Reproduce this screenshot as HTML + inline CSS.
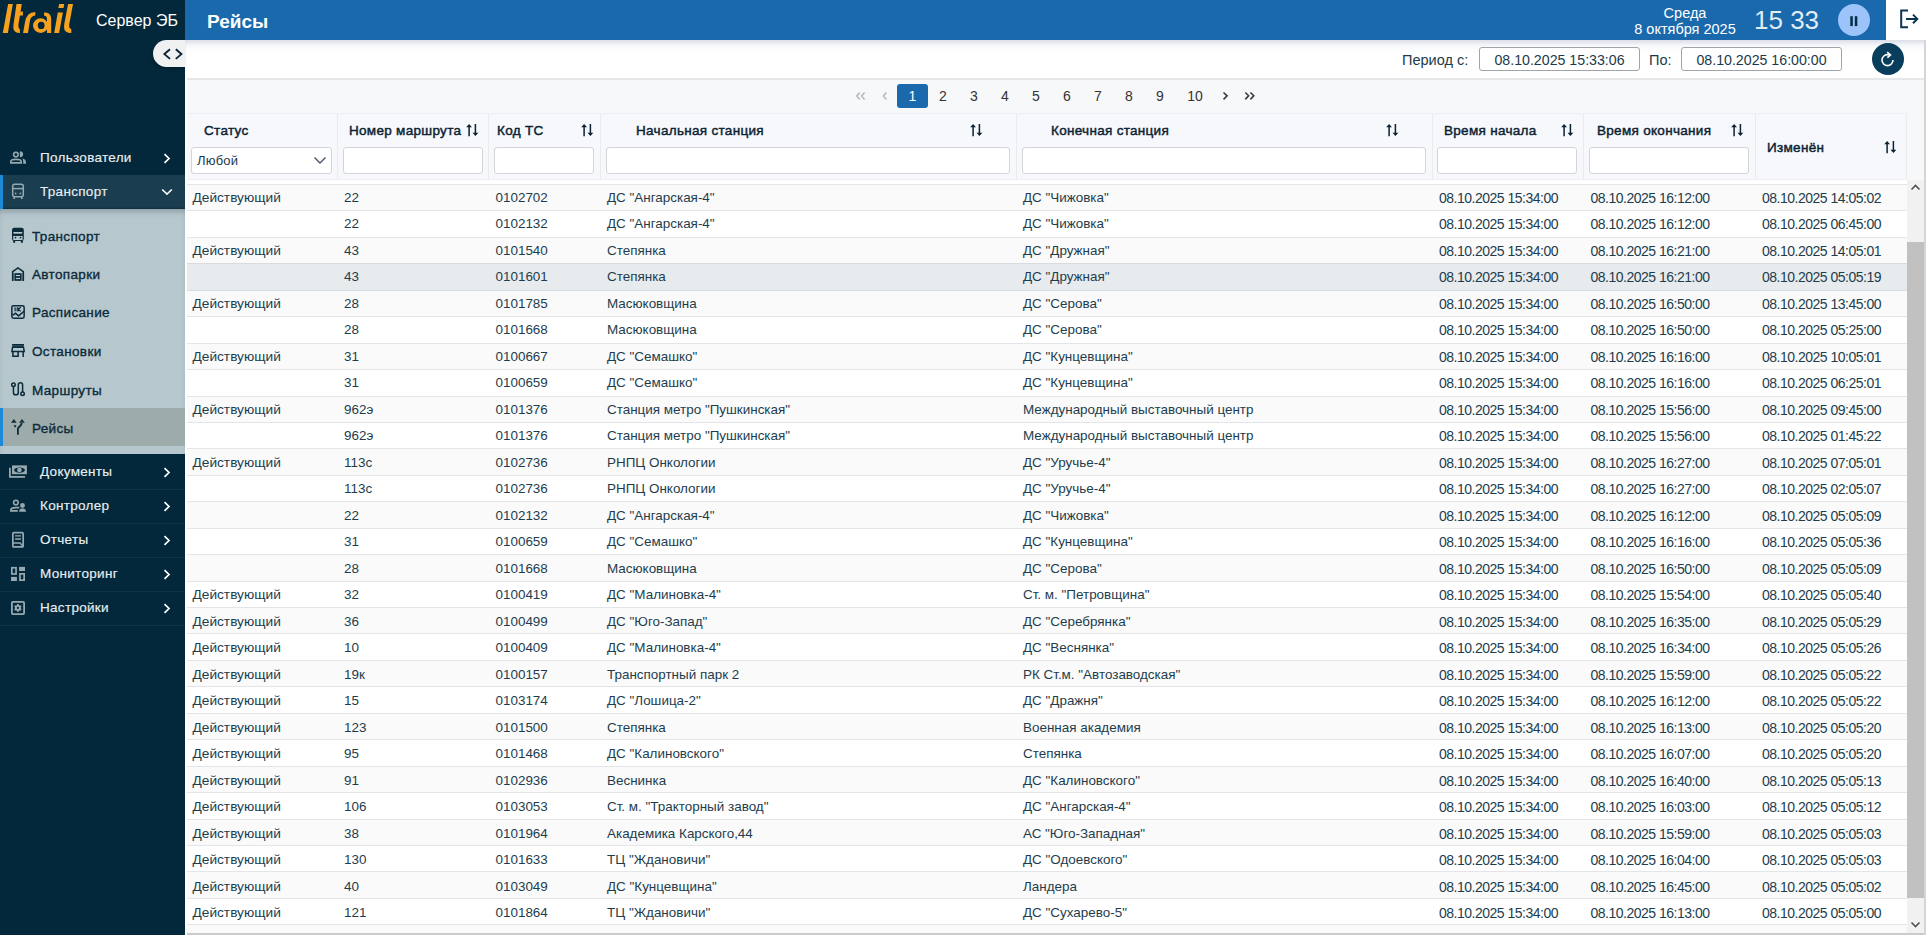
<!DOCTYPE html>
<html lang="ru">
<head>
<meta charset="utf-8">
<title>Рейсы</title>
<style>
html,body{margin:0;padding:0;}
body{width:1926px;height:935px;overflow:hidden;position:relative;background:#ffffff;font-family:"Liberation Sans",sans-serif;color:#1c3a4b;}
.abs{position:absolute;}
#side{position:absolute;left:0;top:0;width:185px;height:935px;background:#03283b;}
#hdr{position:absolute;left:185px;top:0;width:1701px;height:40px;background:#1b69ad;}
#title{position:absolute;left:207px;top:10px;font-size:19px;font-weight:bold;color:#fff;line-height:24px;}
#server{position:absolute;left:96px;top:9px;font-size:16px;color:#fff;line-height:24px;}
#logout{position:absolute;left:1886px;top:0;width:40px;height:40px;background:#fff;}
.date{position:absolute;left:1605px;width:160px;text-align:center;color:#fff;font-size:14.5px;line-height:16px;}
#clock{position:absolute;left:1754px;top:4px;font-size:26px;color:rgba(255,255,255,0.88);line-height:32px;letter-spacing:0px;}
#pause{position:absolute;left:1838px;top:4px;width:32px;height:32px;border-radius:50%;background:#9cc4fb;}
#toolbar{position:absolute;left:185px;top:40px;width:1741px;height:38px;background:#fff;}
#tbline{position:absolute;left:187px;top:78px;width:1739px;height:2px;background:#e6e7e9;}
#shadow{position:absolute;left:185px;top:40px;width:1741px;height:13px;background:linear-gradient(rgba(214,219,230,0.9),rgba(240,242,247,0.5) 45%,rgba(255,255,255,0));}
.lbl{position:absolute;font-size:14.5px;color:#1c3a4b;line-height:16px;}
.dinp{position:absolute;top:47px;height:22px;width:159px;border:1px solid #a0a4a8;border-radius:3px;background:#fff;font-size:14.2px;color:#1c3a4b;line-height:24px;text-align:center;}
#refresh{position:absolute;left:1872px;top:43px;width:32px;height:32px;border-radius:50%;background:#083e5c;}
#pagearea{position:absolute;left:187px;top:79px;width:1739px;height:856px;background:#f7f8fa;}
.pg{position:absolute;top:84px;height:24px;line-height:24px;font-size:14px;color:#333;text-align:center;width:30px;}
.pg.act{background:#1b69ad;color:#fff;border-radius:3px;width:31px;}
.pg.dis{color:#b5bac0;}
#thead{position:absolute;left:187px;top:113px;width:1719px;height:65px;background:#f7f8fb;border-top:1px solid #eceef1;border-bottom:1px solid #eceef0;border-right:1px solid #eaecef;}
.hsep{position:absolute;top:0;width:1px;height:65px;background:#e9ebee;}
.ht{position:absolute;font-size:13.5px;font-weight:normal;-webkit-text-stroke:0.45px #0b2233;letter-spacing:0.3px;color:#0b2233;line-height:16px;white-space:nowrap;}
.sort{position:absolute;}
.inp{position:absolute;top:33px;height:25px;border:1px solid #d3d5d8;border-radius:3px;background:#fff;}
#tbody{position:absolute;left:187px;top:180px;width:1720px;height:753px;background:#fafafa;overflow:hidden;}
.r{position:absolute;left:0;width:1720px;height:26.44px;border-bottom:1px solid #e3e5e8;box-sizing:border-box;background:#fff;}
.r.odd{background:#fafafa;}
.r.hov{background:#e8ebee;border-bottom-color:#d9dbdf;}
.r.pre{border-bottom-color:#d9dbdf;}
.r span.s{font-size:13.7px;}
.r span.d{font-size:14px;top:5.45px;letter-spacing:-0.5px;}
.r span{position:absolute;top:5.45px;font-size:13.45px;line-height:16px;white-space:nowrap;color:#1d3d4d;}
#sb{position:absolute;left:1907px;top:180px;width:17px;height:753px;background:#f1f1f1;}
#thumb{position:absolute;left:1907px;top:242px;width:17px;height:656px;background:#c1c1c1;}
#bottomline{position:absolute;left:187px;top:933px;width:1739px;height:2px;background:#c9cccf;}
/* sidebar */
.sitem{position:absolute;left:0;width:185px;height:34px;color:#e9eef0;font-size:13.5px;line-height:16px;-webkit-text-stroke:0.15px #e9eef0;}
.sitem .t{position:absolute;left:40px;top:9px;white-space:nowrap;letter-spacing:0.3px;}
.sitem svg{position:absolute;}
.sep{position:absolute;left:0;width:185px;height:1px;background:#0d3346;}
#subbg{position:absolute;left:0;top:209px;width:185px;height:245px;background:#b6c8ce;box-shadow:inset 0 5px 6px -3px rgba(0,20,30,0.28);}
.sub{position:absolute;left:0;width:185px;height:38px;color:#0b2a3a;font-size:13.5px;line-height:16px;-webkit-text-stroke:0.35px #0b2a3a;}
.sub .t{position:absolute;left:32px;top:13px;white-space:nowrap;letter-spacing:0.35px;}
.sub svg{position:absolute;left:9px;top:10px;}
</style>
</head>
<body>
<div id="side">
  <svg class="abs" style="left:0;top:0" width="90" height="40" viewBox="0 0 90 40"><g fill="#f7a11e">
<path d="M8.1 4.1H12.8L7.9 32.9H2.8Z"/>
<path d="M16.5 4.1H21.8L18.5 24Q18 28.5 19.9 29.2V32.9Q15.6 33.2 13.9 30Q13 28 13.5 24.5Z"/>
<path d="M20.4 11.5H22.9V15.4H19.7Z"/>
<path d="M23.1 32.9L25 22Q26.7 12.2 35.3 12V15.4Q30.5 15.6 29.8 21.5L28 32.9Z"/>
<path fill-rule="evenodd" d="M33 25.6A7.6 7.3 0 1 0 48.2 25.6A7.6 7.3 0 1 0 33 25.6ZM37.8 25.4A3.4 3.7 0 1 0 44.6 25.4A3.4 3.7 0 1 0 37.8 25.4Z"/>
<path d="M44.1 12.4C49.5 12.4 51.2 15 51.2 19.5V32.9H47V20C47 17 46.3 15.8 44.1 15.8Z"/>
<path d="M59.1 4.1H64.2L63.5 8.1H58.4Z"/>
<path d="M57.8 12.4H62.9L59.1 32.9H54.2Z"/>
<path d="M68.1 4.1H73L69.2 24.5Q68.7 28.6 71.3 29.1V32.9Q65.8 33.2 64.4 29.5Q63.8 27.5 64.2 24.5Z"/>
</g></svg>
  <div id="server">Сервер ЭБ</div>
</div>
<div id="hdr"></div>
<div id="title">Рейсы</div>
<div class="date" style="top:5px">Среда</div>
<div class="date" style="top:21px">8 октября 2025</div>
<div id="clock">15 33</div>
<div id="pause"><svg class="abs" style="left:0;top:0" width="32" height="32"><rect x="12.3" y="12.2" width="2.5" height="9.9" fill="#062d45"/><rect x="16.8" y="12.2" width="2.5" height="9.9" fill="#062d45"/></svg></div>
<div id="logout"><svg class="abs" style="left:0;top:0" width="40" height="40"><path d="M22 10.5H15.2V27.2H22M20 18.9H31M27 14.6L31.3 18.9L27 23.2" fill="none" stroke="#0a3550" stroke-width="2"/></svg></div>

<div id="pagearea"></div>
<div id="toolbar"></div>
<div id="shadow"></div>
<div id="tbline"></div>
<div class="lbl" style="left:1402px;top:52px">Период с:</div>
<div class="dinp" style="left:1479px">08.10.2025 15:33:06</div>
<div class="lbl" style="left:1649px;top:52px">По:</div>
<div class="dinp" style="left:1681px">08.10.2025 16:00:00</div>
<div id="refresh"><svg class="abs" style="left:0;top:0" width="32" height="32"><path d="M21 17.1A5.5 5.5 0 1 1 15.5 11.6H17" fill="none" stroke="#fff" stroke-width="1.6"/><path d="M15.2 9.2L18.4 11.9L15.4 14.6" fill="none" stroke="#fff" stroke-width="1.7"/></svg></div>

<!-- pagination -->
<svg class="abs" style="left:840px;top:84px" width="60" height="24"><g fill="none" stroke="#b3b6ba" stroke-width="1.5"><path d="M19.75 8.5L16.7 12.1L19.75 15.4M24.6 8.5L21.55 12.1L24.6 15.4M46.4 8.5L43.4 12.1L46.4 15.4"/></g></svg>
<div class="pg act" style="left:897px">1</div>
<div class="pg" style="left:928px">2</div>
<div class="pg" style="left:959px">3</div>
<div class="pg" style="left:990px">4</div>
<div class="pg" style="left:1021px">5</div>
<div class="pg" style="left:1052px">6</div>
<div class="pg" style="left:1083px">7</div>
<div class="pg" style="left:1114px">8</div>
<div class="pg" style="left:1145px">9</div>
<div class="pg" style="left:1180px">10</div>
<svg class="abs" style="left:1210px;top:84px" width="60" height="24"><g fill="none" stroke="#3a3a3a" stroke-width="1.6"><path d="M13.5 8.5L17.1 11.8L13.5 15.4M35.3 8.5L38.6 11.8L35.3 15.4M40.4 8.5L43.8 11.8L40.4 15.4"/></g></svg>

<!-- table header -->
<div id="thead">
  <div class="hsep" style="left:150px"></div>
  <div class="hsep" style="left:301px"></div>
  <div class="hsep" style="left:413px"></div>
  <div class="hsep" style="left:829px"></div>
  <div class="hsep" style="left:1245px"></div>
  <div class="hsep" style="left:1396px"></div>
  <div class="hsep" style="left:1568px"></div>
  <div class="ht" style="left:17px;top:9px">Статус</div>
  <div class="ht" style="left:162px;top:9px">Номер маршрута</div>
  <div class="ht" style="left:310px;top:9px">Код ТС</div>
  <div class="ht" style="left:449px;top:9px">Начальная станция</div>
  <div class="ht" style="left:864px;top:9px">Конечная станция</div>
  <div class="ht" style="left:1257px;top:9px">Время начала</div>
  <div class="ht" style="left:1410px;top:9px">Время окончания</div>
  <div class="ht" style="left:1580px;top:26px">Изменён</div>
  <div class="abs" style="left:279px;top:9px"><svg class="sort" width="13" height="14" viewBox="0 0 13 14"><path d="M3.1 3.5V13.2M9.4 1V10.5" fill="none" stroke="#0b2233" stroke-width="1.5"/><path d="M0.2 4.2L3.1 0.9L6 4.2ZM6.5 9.8L9.4 13.1L12.3 9.8Z" fill="#0b2233"/></svg></div>
  <div class="abs" style="left:394px;top:9px"><svg class="sort" width="13" height="14" viewBox="0 0 13 14"><path d="M3.1 3.5V13.2M9.4 1V10.5" fill="none" stroke="#0b2233" stroke-width="1.5"/><path d="M0.2 4.2L3.1 0.9L6 4.2ZM6.5 9.8L9.4 13.1L12.3 9.8Z" fill="#0b2233"/></svg></div>
  <div class="abs" style="left:783px;top:9px"><svg class="sort" width="13" height="14" viewBox="0 0 13 14"><path d="M3.1 3.5V13.2M9.4 1V10.5" fill="none" stroke="#0b2233" stroke-width="1.5"/><path d="M0.2 4.2L3.1 0.9L6 4.2ZM6.5 9.8L9.4 13.1L12.3 9.8Z" fill="#0b2233"/></svg></div>
  <div class="abs" style="left:1199px;top:9px"><svg class="sort" width="13" height="14" viewBox="0 0 13 14"><path d="M3.1 3.5V13.2M9.4 1V10.5" fill="none" stroke="#0b2233" stroke-width="1.5"/><path d="M0.2 4.2L3.1 0.9L6 4.2ZM6.5 9.8L9.4 13.1L12.3 9.8Z" fill="#0b2233"/></svg></div>
  <div class="abs" style="left:1374px;top:9px"><svg class="sort" width="13" height="14" viewBox="0 0 13 14"><path d="M3.1 3.5V13.2M9.4 1V10.5" fill="none" stroke="#0b2233" stroke-width="1.5"/><path d="M0.2 4.2L3.1 0.9L6 4.2ZM6.5 9.8L9.4 13.1L12.3 9.8Z" fill="#0b2233"/></svg></div>
  <div class="abs" style="left:1544px;top:9px"><svg class="sort" width="13" height="14" viewBox="0 0 13 14"><path d="M3.1 3.5V13.2M9.4 1V10.5" fill="none" stroke="#0b2233" stroke-width="1.5"/><path d="M0.2 4.2L3.1 0.9L6 4.2ZM6.5 9.8L9.4 13.1L12.3 9.8Z" fill="#0b2233"/></svg></div>
  <div class="abs" style="left:1697px;top:26px"><svg class="sort" width="13" height="14" viewBox="0 0 13 14"><path d="M3.1 3.5V13.2M9.4 1V10.5" fill="none" stroke="#0b2233" stroke-width="1.5"/><path d="M0.2 4.2L3.1 0.9L6 4.2ZM6.5 9.8L9.4 13.1L12.3 9.8Z" fill="#0b2233"/></svg></div>
  <div class="inp" style="left:4px;width:139px;">
    <div class="abs" style="left:5px;top:5px;font-size:13px;line-height:16px;color:#1c3a4b;letter-spacing:0.2px">Любой</div>
    <svg class="abs" style="left:121px;top:8px" width="14" height="9"><path d="M1.5 1.5L7 7L12.5 1.5" fill="none" stroke="#44566a" stroke-width="1.4"/></svg>
  </div>
  <div class="inp" style="left:156px;width:138px;"></div>
  <div class="inp" style="left:307px;width:98px;"></div>
  <div class="inp" style="left:419px;width:402px;"></div>
  <div class="inp" style="left:835px;width:402px;"></div>
  <div class="inp" style="left:1250px;width:138px;"></div>
  <div class="inp" style="left:1402px;width:158px;"></div>
</div>
<div class="abs" style="left:187px;top:180px;width:1720px;height:5px;background:#fff;border-bottom:1px solid #e3e5e8;box-sizing:border-box"></div>

<div id="tbody" style="top:185px;height:748px">
<div class="r odd" style="top:0.00px"><span class="s" style="left:5.5px;top:5.00px">Действующий</span><span style="left:157.0px;top:5.00px">22</span><span style="left:308.5px;top:5.00px">0102702</span><span style="left:420.0px;top:5.00px">ДС &quot;Ангарская-4&quot;</span><span style="left:836.0px;top:5.00px">ДС &quot;Чижовка&quot;</span><span class="d" style="left:1252.0px;top:5.00px">08.10.2025 15:34:00</span><span class="d" style="left:1403.5px;top:5.00px">08.10.2025 16:12:00</span><span class="d" style="left:1575.0px;top:5.00px">08.10.2025 14:05:02</span></div>
<div class="r" style="top:26.44px"><span class="s" style="left:5.5px;top:5.04px"></span><span style="left:157.0px;top:5.04px">22</span><span style="left:308.5px;top:5.04px">0102132</span><span style="left:420.0px;top:5.04px">ДС &quot;Ангарская-4&quot;</span><span style="left:836.0px;top:5.04px">ДС &quot;Чижовка&quot;</span><span class="d" style="left:1252.0px;top:5.04px">08.10.2025 15:34:00</span><span class="d" style="left:1403.5px;top:5.04px">08.10.2025 16:12:00</span><span class="d" style="left:1575.0px;top:5.04px">08.10.2025 06:45:00</span></div>
<div class="r odd pre" style="top:52.88px"><span class="s" style="left:5.5px;top:5.09px">Действующий</span><span style="left:157.0px;top:5.09px">43</span><span style="left:308.5px;top:5.09px">0101540</span><span style="left:420.0px;top:5.09px">Степянка</span><span style="left:836.0px;top:5.09px">ДС &quot;Дружная&quot;</span><span class="d" style="left:1252.0px;top:5.09px">08.10.2025 15:34:00</span><span class="d" style="left:1403.5px;top:5.09px">08.10.2025 16:21:00</span><span class="d" style="left:1575.0px;top:5.09px">08.10.2025 14:05:01</span></div>
<div class="r hov" style="top:79.32px"><span class="s" style="left:5.5px;top:5.13px"></span><span style="left:157.0px;top:5.13px">43</span><span style="left:308.5px;top:5.13px">0101601</span><span style="left:420.0px;top:5.13px">Степянка</span><span style="left:836.0px;top:5.13px">ДС &quot;Дружная&quot;</span><span class="d" style="left:1252.0px;top:5.13px">08.10.2025 15:34:00</span><span class="d" style="left:1403.5px;top:5.13px">08.10.2025 16:21:00</span><span class="d" style="left:1575.0px;top:5.13px">08.10.2025 05:05:19</span></div>
<div class="r odd" style="top:105.76px"><span class="s" style="left:5.5px;top:5.18px">Действующий</span><span style="left:157.0px;top:5.18px">28</span><span style="left:308.5px;top:5.18px">0101785</span><span style="left:420.0px;top:5.18px">Масюковщина</span><span style="left:836.0px;top:5.18px">ДС &quot;Серова&quot;</span><span class="d" style="left:1252.0px;top:5.18px">08.10.2025 15:34:00</span><span class="d" style="left:1403.5px;top:5.18px">08.10.2025 16:50:00</span><span class="d" style="left:1575.0px;top:5.18px">08.10.2025 13:45:00</span></div>
<div class="r" style="top:132.20px"><span class="s" style="left:5.5px;top:5.22px"></span><span style="left:157.0px;top:5.22px">28</span><span style="left:308.5px;top:5.22px">0101668</span><span style="left:420.0px;top:5.22px">Масюковщина</span><span style="left:836.0px;top:5.22px">ДС &quot;Серова&quot;</span><span class="d" style="left:1252.0px;top:5.22px">08.10.2025 15:34:00</span><span class="d" style="left:1403.5px;top:5.22px">08.10.2025 16:50:00</span><span class="d" style="left:1575.0px;top:5.22px">08.10.2025 05:25:00</span></div>
<div class="r odd" style="top:158.64px"><span class="s" style="left:5.5px;top:5.27px">Действующий</span><span style="left:157.0px;top:5.27px">31</span><span style="left:308.5px;top:5.27px">0100667</span><span style="left:420.0px;top:5.27px">ДС &quot;Семашко&quot;</span><span style="left:836.0px;top:5.27px">ДС &quot;Кунцевщина&quot;</span><span class="d" style="left:1252.0px;top:5.27px">08.10.2025 15:34:00</span><span class="d" style="left:1403.5px;top:5.27px">08.10.2025 16:16:00</span><span class="d" style="left:1575.0px;top:5.27px">08.10.2025 10:05:01</span></div>
<div class="r" style="top:185.08px"><span class="s" style="left:5.5px;top:5.32px"></span><span style="left:157.0px;top:5.32px">31</span><span style="left:308.5px;top:5.32px">0100659</span><span style="left:420.0px;top:5.32px">ДС &quot;Семашко&quot;</span><span style="left:836.0px;top:5.32px">ДС &quot;Кунцевщина&quot;</span><span class="d" style="left:1252.0px;top:5.32px">08.10.2025 15:34:00</span><span class="d" style="left:1403.5px;top:5.32px">08.10.2025 16:16:00</span><span class="d" style="left:1575.0px;top:5.32px">08.10.2025 06:25:01</span></div>
<div class="r odd" style="top:211.52px"><span class="s" style="left:5.5px;top:5.36px">Действующий</span><span style="left:157.0px;top:5.36px">962э</span><span style="left:308.5px;top:5.36px">0101376</span><span style="left:420.0px;top:5.36px">Станция метро &quot;Пушкинская&quot;</span><span style="left:836.0px;top:5.36px">Международный выставочный центр</span><span class="d" style="left:1252.0px;top:5.36px">08.10.2025 15:34:00</span><span class="d" style="left:1403.5px;top:5.36px">08.10.2025 15:56:00</span><span class="d" style="left:1575.0px;top:5.36px">08.10.2025 09:45:00</span></div>
<div class="r" style="top:237.96px"><span class="s" style="left:5.5px;top:5.41px"></span><span style="left:157.0px;top:5.41px">962э</span><span style="left:308.5px;top:5.41px">0101376</span><span style="left:420.0px;top:5.41px">Станция метро &quot;Пушкинская&quot;</span><span style="left:836.0px;top:5.41px">Международный выставочный центр</span><span class="d" style="left:1252.0px;top:5.41px">08.10.2025 15:34:00</span><span class="d" style="left:1403.5px;top:5.41px">08.10.2025 15:56:00</span><span class="d" style="left:1575.0px;top:5.41px">08.10.2025 01:45:22</span></div>
<div class="r odd" style="top:264.40px"><span class="s" style="left:5.5px;top:5.45px">Действующий</span><span style="left:157.0px;top:5.45px">113с</span><span style="left:308.5px;top:5.45px">0102736</span><span style="left:420.0px;top:5.45px">РНПЦ Онкологии</span><span style="left:836.0px;top:5.45px">ДС &quot;Уручье-4&quot;</span><span class="d" style="left:1252.0px;top:5.45px">08.10.2025 15:34:00</span><span class="d" style="left:1403.5px;top:5.45px">08.10.2025 16:27:00</span><span class="d" style="left:1575.0px;top:5.45px">08.10.2025 07:05:01</span></div>
<div class="r" style="top:290.84px"><span class="s" style="left:5.5px;top:5.50px"></span><span style="left:157.0px;top:5.50px">113с</span><span style="left:308.5px;top:5.50px">0102736</span><span style="left:420.0px;top:5.50px">РНПЦ Онкологии</span><span style="left:836.0px;top:5.50px">ДС &quot;Уручье-4&quot;</span><span class="d" style="left:1252.0px;top:5.50px">08.10.2025 15:34:00</span><span class="d" style="left:1403.5px;top:5.50px">08.10.2025 16:27:00</span><span class="d" style="left:1575.0px;top:5.50px">08.10.2025 02:05:07</span></div>
<div class="r odd" style="top:317.28px"><span class="s" style="left:5.5px;top:5.54px"></span><span style="left:157.0px;top:5.54px">22</span><span style="left:308.5px;top:5.54px">0102132</span><span style="left:420.0px;top:5.54px">ДС &quot;Ангарская-4&quot;</span><span style="left:836.0px;top:5.54px">ДС &quot;Чижовка&quot;</span><span class="d" style="left:1252.0px;top:5.54px">08.10.2025 15:34:00</span><span class="d" style="left:1403.5px;top:5.54px">08.10.2025 16:12:00</span><span class="d" style="left:1575.0px;top:5.54px">08.10.2025 05:05:09</span></div>
<div class="r" style="top:343.72px"><span class="s" style="left:5.5px;top:5.58px"></span><span style="left:157.0px;top:5.58px">31</span><span style="left:308.5px;top:5.58px">0100659</span><span style="left:420.0px;top:5.58px">ДС &quot;Семашко&quot;</span><span style="left:836.0px;top:5.58px">ДС &quot;Кунцевщина&quot;</span><span class="d" style="left:1252.0px;top:5.58px">08.10.2025 15:34:00</span><span class="d" style="left:1403.5px;top:5.58px">08.10.2025 16:16:00</span><span class="d" style="left:1575.0px;top:5.58px">08.10.2025 05:05:36</span></div>
<div class="r odd" style="top:370.16px"><span class="s" style="left:5.5px;top:5.63px"></span><span style="left:157.0px;top:5.63px">28</span><span style="left:308.5px;top:5.63px">0101668</span><span style="left:420.0px;top:5.63px">Масюковщина</span><span style="left:836.0px;top:5.63px">ДС &quot;Серова&quot;</span><span class="d" style="left:1252.0px;top:5.63px">08.10.2025 15:34:00</span><span class="d" style="left:1403.5px;top:5.63px">08.10.2025 16:50:00</span><span class="d" style="left:1575.0px;top:5.63px">08.10.2025 05:05:09</span></div>
<div class="r" style="top:396.60px"><span class="s" style="left:5.5px;top:5.67px">Действующий</span><span style="left:157.0px;top:5.67px">32</span><span style="left:308.5px;top:5.67px">0100419</span><span style="left:420.0px;top:5.67px">ДС &quot;Малиновка-4&quot;</span><span style="left:836.0px;top:5.67px">Ст. м. &quot;Петровщина&quot;</span><span class="d" style="left:1252.0px;top:5.67px">08.10.2025 15:34:00</span><span class="d" style="left:1403.5px;top:5.67px">08.10.2025 15:54:00</span><span class="d" style="left:1575.0px;top:5.67px">08.10.2025 05:05:40</span></div>
<div class="r odd" style="top:423.04px"><span class="s" style="left:5.5px;top:5.72px">Действующий</span><span style="left:157.0px;top:5.72px">36</span><span style="left:308.5px;top:5.72px">0100499</span><span style="left:420.0px;top:5.72px">ДС &quot;Юго-Запад&quot;</span><span style="left:836.0px;top:5.72px">ДС &quot;Серебрянка&quot;</span><span class="d" style="left:1252.0px;top:5.72px">08.10.2025 15:34:00</span><span class="d" style="left:1403.5px;top:5.72px">08.10.2025 16:35:00</span><span class="d" style="left:1575.0px;top:5.72px">08.10.2025 05:05:29</span></div>
<div class="r" style="top:449.48px"><span class="s" style="left:5.5px;top:5.76px">Действующий</span><span style="left:157.0px;top:5.76px">10</span><span style="left:308.5px;top:5.76px">0100409</span><span style="left:420.0px;top:5.76px">ДС &quot;Малиновка-4&quot;</span><span style="left:836.0px;top:5.76px">ДС &quot;Веснянка&quot;</span><span class="d" style="left:1252.0px;top:5.76px">08.10.2025 15:34:00</span><span class="d" style="left:1403.5px;top:5.76px">08.10.2025 16:34:00</span><span class="d" style="left:1575.0px;top:5.76px">08.10.2025 05:05:26</span></div>
<div class="r odd" style="top:475.92px"><span class="s" style="left:5.5px;top:5.81px">Действующий</span><span style="left:157.0px;top:5.81px">19к</span><span style="left:308.5px;top:5.81px">0100157</span><span style="left:420.0px;top:5.81px">Транспортный парк 2</span><span style="left:836.0px;top:5.81px">РК Ст.м. &quot;Автозаводская&quot;</span><span class="d" style="left:1252.0px;top:5.81px">08.10.2025 15:34:00</span><span class="d" style="left:1403.5px;top:5.81px">08.10.2025 15:59:00</span><span class="d" style="left:1575.0px;top:5.81px">08.10.2025 05:05:22</span></div>
<div class="r" style="top:502.36px"><span class="s" style="left:5.5px;top:5.86px">Действующий</span><span style="left:157.0px;top:5.86px">15</span><span style="left:308.5px;top:5.86px">0103174</span><span style="left:420.0px;top:5.86px">ДС &quot;Лошица-2&quot;</span><span style="left:836.0px;top:5.86px">ДС &quot;Дражня&quot;</span><span class="d" style="left:1252.0px;top:5.86px">08.10.2025 15:34:00</span><span class="d" style="left:1403.5px;top:5.86px">08.10.2025 16:12:00</span><span class="d" style="left:1575.0px;top:5.86px">08.10.2025 05:05:22</span></div>
<div class="r odd" style="top:528.80px"><span class="s" style="left:5.5px;top:5.90px">Действующий</span><span style="left:157.0px;top:5.90px">123</span><span style="left:308.5px;top:5.90px">0101500</span><span style="left:420.0px;top:5.90px">Степянка</span><span style="left:836.0px;top:5.90px">Военная академия</span><span class="d" style="left:1252.0px;top:5.90px">08.10.2025 15:34:00</span><span class="d" style="left:1403.5px;top:5.90px">08.10.2025 16:13:00</span><span class="d" style="left:1575.0px;top:5.90px">08.10.2025 05:05:20</span></div>
<div class="r" style="top:555.24px"><span class="s" style="left:5.5px;top:5.95px">Действующий</span><span style="left:157.0px;top:5.95px">95</span><span style="left:308.5px;top:5.95px">0101468</span><span style="left:420.0px;top:5.95px">ДС &quot;Калиновского&quot;</span><span style="left:836.0px;top:5.95px">Степянка</span><span class="d" style="left:1252.0px;top:5.95px">08.10.2025 15:34:00</span><span class="d" style="left:1403.5px;top:5.95px">08.10.2025 16:07:00</span><span class="d" style="left:1575.0px;top:5.95px">08.10.2025 05:05:20</span></div>
<div class="r odd" style="top:581.68px"><span class="s" style="left:5.5px;top:5.99px">Действующий</span><span style="left:157.0px;top:5.99px">91</span><span style="left:308.5px;top:5.99px">0102936</span><span style="left:420.0px;top:5.99px">Веснинка</span><span style="left:836.0px;top:5.99px">ДС &quot;Калиновского&quot;</span><span class="d" style="left:1252.0px;top:5.99px">08.10.2025 15:34:00</span><span class="d" style="left:1403.5px;top:5.99px">08.10.2025 16:40:00</span><span class="d" style="left:1575.0px;top:5.99px">08.10.2025 05:05:13</span></div>
<div class="r" style="top:608.12px"><span class="s" style="left:5.5px;top:6.04px">Действующий</span><span style="left:157.0px;top:6.04px">106</span><span style="left:308.5px;top:6.04px">0103053</span><span style="left:420.0px;top:6.04px">Ст. м. &quot;Тракторный завод&quot;</span><span style="left:836.0px;top:6.04px">ДС &quot;Ангарская-4&quot;</span><span class="d" style="left:1252.0px;top:6.04px">08.10.2025 15:34:00</span><span class="d" style="left:1403.5px;top:6.04px">08.10.2025 16:03:00</span><span class="d" style="left:1575.0px;top:6.04px">08.10.2025 05:05:12</span></div>
<div class="r odd" style="top:634.56px"><span class="s" style="left:5.5px;top:6.08px">Действующий</span><span style="left:157.0px;top:6.08px">38</span><span style="left:308.5px;top:6.08px">0101964</span><span style="left:420.0px;top:6.08px">Академика Карского,44</span><span style="left:836.0px;top:6.08px">АС &quot;Юго-Западная&quot;</span><span class="d" style="left:1252.0px;top:6.08px">08.10.2025 15:34:00</span><span class="d" style="left:1403.5px;top:6.08px">08.10.2025 15:59:00</span><span class="d" style="left:1575.0px;top:6.08px">08.10.2025 05:05:03</span></div>
<div class="r" style="top:661.00px"><span class="s" style="left:5.5px;top:6.12px">Действующий</span><span style="left:157.0px;top:6.12px">130</span><span style="left:308.5px;top:6.12px">0101633</span><span style="left:420.0px;top:6.12px">ТЦ &quot;Ждановичи&quot;</span><span style="left:836.0px;top:6.12px">ДС &quot;Одоевского&quot;</span><span class="d" style="left:1252.0px;top:6.12px">08.10.2025 15:34:00</span><span class="d" style="left:1403.5px;top:6.12px">08.10.2025 16:04:00</span><span class="d" style="left:1575.0px;top:6.12px">08.10.2025 05:05:03</span></div>
<div class="r odd" style="top:687.44px"><span class="s" style="left:5.5px;top:6.17px">Действующий</span><span style="left:157.0px;top:6.17px">40</span><span style="left:308.5px;top:6.17px">0103049</span><span style="left:420.0px;top:6.17px">ДС &quot;Кунцевщина&quot;</span><span style="left:836.0px;top:6.17px">Ландера</span><span class="d" style="left:1252.0px;top:6.17px">08.10.2025 15:34:00</span><span class="d" style="left:1403.5px;top:6.17px">08.10.2025 16:45:00</span><span class="d" style="left:1575.0px;top:6.17px">08.10.2025 05:05:02</span></div>
<div class="r" style="top:713.88px"><span class="s" style="left:5.5px;top:6.21px">Действующий</span><span style="left:157.0px;top:6.21px">121</span><span style="left:308.5px;top:6.21px">0101864</span><span style="left:420.0px;top:6.21px">ТЦ &quot;Ждановичи&quot;</span><span style="left:836.0px;top:6.21px">ДС &quot;Сухарево-5&quot;</span><span class="d" style="left:1252.0px;top:6.21px">08.10.2025 15:34:00</span><span class="d" style="left:1403.5px;top:6.21px">08.10.2025 16:13:00</span><span class="d" style="left:1575.0px;top:6.21px">08.10.2025 05:05:00</span></div>
</div>
<div id="sb"></div>
<div id="thumb"></div>
<svg class="abs" style="left:1907px;top:180px" width="17" height="14"><path d="M4.5 9.5L8.5 5.5L12.5 9.5" fill="none" stroke="#505050" stroke-width="1.6"/></svg>
<svg class="abs" style="left:1907px;top:918px" width="17" height="14"><path d="M4.5 4.5L8.5 8.5L12.5 4.5" fill="none" stroke="#505050" stroke-width="1.6"/></svg>
<div id="bottomline"></div>
<div class="abs" style="left:1924px;top:40px;width:2px;height:895px;background:#d3d5d8"></div>

<!-- sidebar menu -->
<div class="sitem" style="top:141px">
  <div class="t">Пользователи</div>
  <svg style="left:163px;top:12px" width="8" height="11"><path d="M1.5 1.2L6 5.5L1.5 9.8" fill="none" stroke="#fff" stroke-width="1.7"/></svg>
</div>
<svg class="abs" style="left:6px;top:146px" width="24" height="24" viewBox="0 0 24 24"><g fill="none" stroke="#97a9b0" stroke-width="1.6"><circle cx="9.9" cy="8.5" r="2.3"/><path d="M4.8 16.9V15.6C4.8 13.9 7 13.4 10 13.4S15.2 13.9 15.2 15.6V16.9Z"/></g><path d="M14 5.2A3.05 3.05 0 0 1 14 11.3Q13.6 8.25 14 5.2Z" fill="#97a9b0"/><path d="M16.4 12.5C18.6 13 20 14.3 20 16.4V17.7H17.2V16C17.2 14.6 17 13.5 16.4 12.5Z" fill="#97a9b0"/></svg>

<div class="sitem" style="top:175px;background:#1a3d50;box-shadow:inset 0 -2px 2px -1px rgba(0,0,0,0.3)">
  <div class="abs" style="left:0;top:0;width:3px;height:34px;background:#1d8ad8"></div>
  <div class="t">Транспорт</div>
  <svg style="left:161px;top:13px" width="12" height="9"><path d="M1.2 1.5L6 6L10.8 1.5" fill="none" stroke="#fff" stroke-width="1.7"/></svg>
</div>
<svg class="abs" style="left:6px;top:180px" width="24" height="24" viewBox="0 0 24 24"><g fill="none" stroke="#97a9b0" stroke-width="1.5"><rect x="6.7" y="4.2" width="10.6" height="12.6" rx="2"/><path d="M6.7 8.6H17.3"/></g><g fill="#97a9b0"><circle cx="9.6" cy="13.5" r="0.9"/><circle cx="14.4" cy="13.5" r="0.9"/><rect x="7.4" y="16.5" width="1.6" height="2.5"/><rect x="15" y="16.5" width="1.6" height="2.5"/></g></svg>

<div id="subbg"></div>
<div class="abs" style="left:0;top:408px;width:185px;height:38px;background:#9eabab"></div>
<div class="abs" style="left:0;top:408px;width:3px;height:38px;background:#1d8ad8"></div>
<div class="sub" style="top:216px"><div class="t">Транспорт</div></div>
<svg class="abs" style="left:6px;top:224px" width="24" height="24" viewBox="0 0 24 24"><rect x="6" y="3.8" width="11.8" height="13.1" rx="2.2" fill="#0b2a3a"/><g fill="#b6c8ce"><rect x="7.4" y="8" width="8.8" height="1.65"/><rect x="7.2" y="12" width="9.4" height="4"/></g><g fill="#0b2a3a"><circle cx="9.5" cy="13.6" r="0.9"/><circle cx="14.5" cy="13.6" r="0.9"/><rect x="7.2" y="16.5" width="1.9" height="2.3"/><rect x="14.9" y="16.5" width="1.9" height="2.3"/></g></svg>

<div class="sub" style="top:254px"><div class="t">Автопарки</div></div>
<svg class="abs" style="left:6px;top:262px" width="24" height="24" viewBox="0 0 24 24"><path d="M7.5 11.2H16.5V18.8H7.5Z" fill="#4d6874"/><path d="M6.7 19V9.6L11.95 5.9L17.3 9.6V19" fill="none" stroke="#0b2a3a" stroke-width="1.6"/><rect x="9" y="11.3" width="5.9" height="7.4" fill="#0b2a3a"/><g fill="#b6c8ce"><rect x="9.9" y="12.9" width="4.1" height="1.2"/><rect x="9.9" y="15.9" width="4.1" height="1.2"/></g></svg>

<div class="sub" style="top:292px"><div class="t">Расписание</div></div>
<svg class="abs" style="left:6px;top:300px" width="24" height="24" viewBox="0 0 24 24"><g fill="none" stroke="#0b2a3a" stroke-width="1.5"><rect x="5.85" y="5.75" width="12.3" height="12.4" rx="1.6"/><path d="M6.4 15.4L9.5 13.3L12.6 15.9L18 11.3"/></g><rect x="8.2" y="7.4" width="2.3" height="3.9" fill="#3d5a66"/><path d="M11.8 7.2V11.4M14.8 7.2L12.2 9.3L14.8 11.4" fill="none" stroke="#0b2a3a" stroke-width="1.2"/></svg>

<div class="sub" style="top:331px"><div class="t">Остановки</div></div>
<svg class="abs" style="left:6px;top:338px" width="24" height="24" viewBox="0 0 24 24"><rect x="6.2" y="6" width="11.7" height="3.2" fill="#2e4d5a"/><path d="M6.2 6.6H17.9" stroke="#0b2a3a" stroke-width="1.2"/><path d="M6.6 9.2H17.5L18.2 13.4H5.9Z" fill="none" stroke="#0b2a3a" stroke-width="1.5"/><path d="M6.9 13.6V18.2H12.1V13.6M17.2 13.6V18.9" fill="none" stroke="#0b2a3a" stroke-width="1.5"/></svg>

<div class="sub" style="top:370px"><div class="t">Маршруты</div></div>
<svg class="abs" style="left:6px;top:377px" width="24" height="24" viewBox="0 0 24 24"><g fill="none" stroke="#0b2a3a" stroke-width="1.5"><circle cx="7.45" cy="7.7" r="1.75"/><circle cx="16.55" cy="16.7" r="1.75"/><path d="M7.45 9.5V15.4A2.42 2.42 0 0 0 12.3 15.4V7.85A2.15 2.15 0 0 1 16.6 7.85V14.9"/></g></svg>

<div class="sub" style="top:408px"><div class="t">Рейсы</div></div>
<svg class="abs" style="left:6px;top:415px" width="24" height="24" viewBox="0 0 24 24"><g fill="none" stroke="#0b2a3a" stroke-width="1.8"><path d="M11.9 19.8V13.8C11.9 12 15.9 11 15.9 7.2"/><path d="M8.3 10.4L9.9 11.9"/></g><g fill="#0b2a3a"><polygon points="13.1,7.7 15.95,4.1 18.8,7.7 17.2,7.7 15.95,6.5 14.7,7.7"/><polygon points="5,7.7 7.85,4.1 10.7,7.7 9.1,7.7 7.85,6.5 6.6,7.7"/><rect x="7.1" y="6.5" width="1.5" height="1.4"/></g></svg>

<div class="sitem" style="top:455px">
  <div class="t">Документы</div>
  <svg style="left:163px;top:12px" width="8" height="11"><path d="M1.5 1.2L6 5.5L1.5 9.8" fill="none" stroke="#fff" stroke-width="1.7"/></svg>
</div>
<svg class="abs" style="left:6px;top:460px" width="24" height="24" viewBox="0 0 24 24"><rect x="6" y="5.4" width="14.9" height="8.8" fill="#97a9b0"/><ellipse cx="13.5" cy="10.1" rx="5.4" ry="2.7" fill="#03283b"/><circle cx="13.4" cy="10" r="2.3" fill="#97a9b0"/><path d="M3.9 7.7V16.8H19" fill="none" stroke="#97a9b0" stroke-width="1.8"/></svg>
<div class="sep" style="top:489px"></div>
<div class="sitem" style="top:489px">
  <div class="t">Контролер</div>
  <svg style="left:163px;top:12px" width="8" height="11"><path d="M1.5 1.2L6 5.5L1.5 9.8" fill="none" stroke="#fff" stroke-width="1.7"/></svg>
</div>
<svg class="abs" style="left:6px;top:494px" width="24" height="24" viewBox="0 0 24 24"><g fill="none" stroke="#97a9b0" stroke-width="1.6"><circle cx="9.9" cy="8.5" r="2.3"/><path d="M13.4 13.6H9.5C6.2 13.6 4.8 14.6 4.8 16.2V16.9H11.8"/></g><g fill="#97a9b0"><circle cx="16.5" cy="11.5" r="2.4"/><path d="M13.1 17.7C13.1 15.6 14.5 14.6 16.5 14.6S20 15.6 20 17.7Z"/></g></svg>
<div class="sep" style="top:523px"></div>
<div class="sitem" style="top:523px">
  <div class="t">Отчеты</div>
  <svg style="left:163px;top:12px" width="8" height="11"><path d="M1.5 1.2L6 5.5L1.5 9.8" fill="none" stroke="#fff" stroke-width="1.7"/></svg>
</div>
<svg class="abs" style="left:6px;top:528px" width="24" height="24" viewBox="0 0 24 24"><g fill="none" stroke="#97a9b0"><rect x="6.85" y="4.7" width="10.3" height="14.25" rx="1" stroke-width="1.7"/><path d="M9.1 7.8H15M9.1 11H15" stroke-width="1.3"/><path d="M6.8 15H14L17.2 18.5" stroke-width="1.4"/></g></svg>
<div class="sep" style="top:557px"></div>
<div class="sitem" style="top:557px">
  <div class="t">Мониторинг</div>
  <svg style="left:163px;top:12px" width="8" height="11"><path d="M1.5 1.2L6 5.5L1.5 9.8" fill="none" stroke="#fff" stroke-width="1.7"/></svg>
</div>
<svg class="abs" style="left:6px;top:562px" width="24" height="24" viewBox="0 0 24 24"><g fill="none" stroke="#97a9b0" stroke-width="1.7"><rect x="5.85" y="5.75" width="4.2" height="6.2"/><rect x="13.95" y="11.85" width="4.2" height="6.3"/></g><g fill="#97a9b0"><rect x="13.1" y="4.9" width="5.9" height="4.1"/><rect x="5" y="14.9" width="5.9" height="4.1"/></g></svg>
<div class="sep" style="top:591px"></div>
<div class="sitem" style="top:591px">
  <div class="t">Настройки</div>
  <svg style="left:163px;top:12px" width="8" height="11"><path d="M1.5 1.2L6 5.5L1.5 9.8" fill="none" stroke="#fff" stroke-width="1.7"/></svg>
</div>
<svg class="abs" style="left:6px;top:596px" width="24" height="24" viewBox="0 0 24 24"><rect x="5.9" y="5.9" width="12.2" height="12.2" rx="1" fill="none" stroke="#97a9b0" stroke-width="1.8"/><g fill="#97a9b0" transform="translate(11.9 11.9)"><circle r="2.9"/><rect x="-0.9" y="-3.9" width="1.8" height="7.8"/><rect x="-0.9" y="-3.9" width="1.8" height="7.8" transform="rotate(60)"/><rect x="-0.9" y="-3.9" width="1.8" height="7.8" transform="rotate(120)"/></g><circle cx="11.9" cy="11.9" r="1.1" fill="#03283b"/></svg>
<div class="sep" style="top:625px"></div>

<!-- toggle -->
<div class="abs" style="left:153px;top:40px;width:32px;height:27px;background:#eef0f2;border-radius:14px 0 0 14px;box-shadow:-1px 2px 3px rgba(0,0,0,0.25)"></div>
<svg class="abs" style="left:162px;top:46px" width="22" height="17"><path d="M8 3.3L2.4 8.1L8 12.9M13.8 3.3L19.4 8.1L13.8 12.9" fill="none" stroke="#0b2233" stroke-width="1.9"/></svg>
</body>
</html>
